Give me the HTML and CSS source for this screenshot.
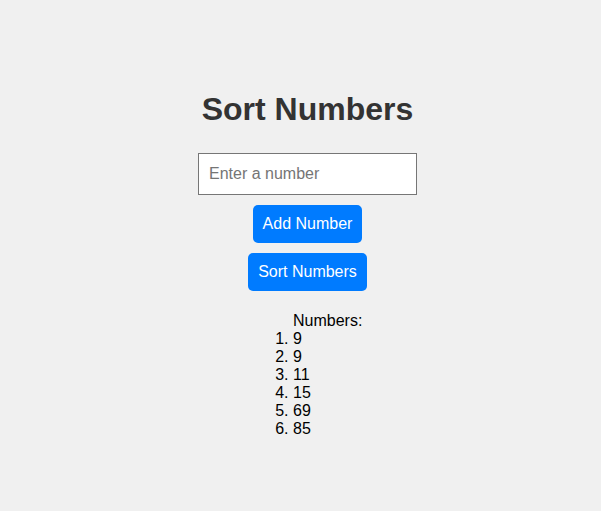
FILE: index.html
```html
<!DOCTYPE html>
<html>
<head>
<meta charset="utf-8">
<title>Sort Numbers</title>
<link rel="stylesheet" href="styles.css">
</head>
<body>
<div class="app">
  <h1 class="title">Sort Numbers</h1>
  <input class="num-input" type="text" placeholder="Enter a number">
  <button class="btn btn-add">Add Number</button>
  <button class="btn btn-sort">Sort Numbers</button>
  <div class="result">
    <div class="result-label">Numbers:</div>
    <ol class="result-list">
      <li>9</li>
      <li>9</li>
      <li>11</li>
      <li>15</li>
      <li>69</li>
      <li>85</li>
    </ol>
  </div>
</div>
</body>
</html>
```
FILE: styles.css
```css
html, body {
  margin: 0;
  padding: 0;
  background: #f0f0f0;
}
body {
  font-family: "Liberation Sans", Arial, sans-serif;
  font-size: 16px;
  color: #000;
}
.app {
  display: flex;
  flex-direction: column;
  align-items: center;
  padding-top: 73px;
  padding-left: 14px;
}
.title {
  font-size: 32px;
  font-weight: bold;
  color: #333;
  margin: 18px 0 25px;
  line-height: 37px;
}
.num-input {
  box-sizing: border-box;
  width: 219px;
  height: 42px;
  padding: 0 10px;
  border: 1px solid #767676;
  border-radius: 0;
  background: #fff;
  font-family: "Liberation Sans", Arial, sans-serif;
  font-size: 16px;
  color: #000;
  outline: none;
}
.num-input::placeholder {
  color: #757575;
}
.btn {
  box-sizing: border-box;
  height: 38px;
  padding: 0 10px;
  border: none;
  border-radius: 5px;
  background: #007bff;
  color: #fff;
  font-family: "Liberation Sans", Arial, sans-serif;
  font-size: 16px;
  line-height: 18px;
  cursor: pointer;
}
.btn-add {
  margin-top: 10px;
}
.btn-sort {
  margin-top: 10px;
}
.result {
  align-self: stretch;
  margin-top: 21px;
  padding-left: 279px;
  line-height: 18px;
}
.result-list {
  margin: 0;
  padding: 0;
}
```
